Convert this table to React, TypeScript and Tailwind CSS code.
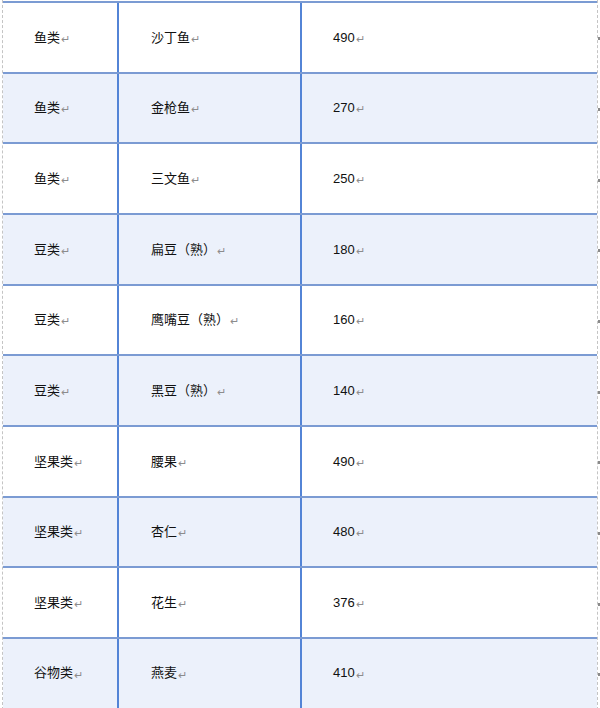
const rows: [string, string, string][] = [
  ['鱼类', '沙丁鱼', '490'],
  ['鱼类', '金枪鱼', '270'],
  ['鱼类', '三文鱼', '250'],
  ['豆类', '扁豆（熟）', '180'],
  ['豆类', '鹰嘴豆（熟）', '160'],
  ['豆类', '黑豆（熟）', '140'],
  ['坚果类', '腰果', '490'],
  ['坚果类', '杏仁', '480'],
  ['坚果类', '花生', '376'],
  ['谷物类', '燕麦', '410'],
];

function Cell({ text, className }: { text: string; className: string }) {
  return (
    <div className={`flex items-center h-full ${className}`}>
      <span className="text-[13px] text-[#111] whitespace-pre">{text}</span>
      <span className="text-[11px] text-[#8c8c8c] mt-[4px] ml-[1px] leading-none">↵</span>
    </div>
  );
}

export default function App() {
  return (
    <div
      className="w-[600px] h-[708px] overflow-hidden bg-white relative"
      style={{ fontFamily: '"Liberation Sans", "Noto Sans CJK SC", sans-serif' }}
    >
      <div className="ml-[2px] w-[596px] border-l border-r border-dashed border-[#c4c4c4] pt-[1px]">
        <div className="border-t-2 border-[#7b9bd3]">
          {rows.map(([a, b, c], i) => (
            <div
              key={i}
              className={`relative flex h-[70.67px] border-b-2 border-[#7b9bd3] ${i % 2 === 1 ? 'bg-[#ecf1fb]' : 'bg-white'}`}
            >
              <Cell text={a} className="w-[116px] pl-[31px] border-r-2 border-[#5384d6]" />
              <Cell text={b} className="w-[183px] pl-[32px] border-r-2 border-[#5384d6]" />
              <Cell text={c} className="flex-1 pl-[31px]" />
              <span className="absolute right-[-3px] top-1/2 w-[2px] h-[3px] bg-[#8a8a8a]" />
            </div>
          ))}
        </div>
      </div>
    </div>
  );
}
